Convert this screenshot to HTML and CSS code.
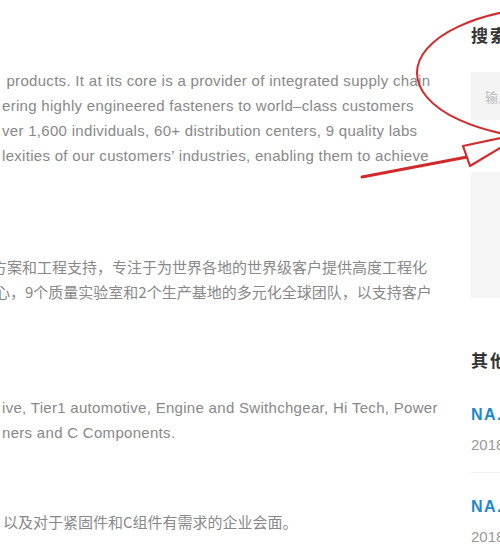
FILE: index.html
```html
<!DOCTYPE html>
<html lang="zh">
<head>
<meta charset="utf-8">
<title>About</title>
<link rel="stylesheet" href="styles.css">
</head>
<body>
<div class="page">
  <main class="main">
    <div class="para en">
      <div class="ln">&nbsp;products. It at its core is a provider of integrated supply chain</div>
      <div class="ln">ering highly engineered fasteners to world–class customers</div>
      <div class="ln">ver 1,600 individuals, 60+ distribution centers, 9 quality labs</div>
      <div class="ln">lexities of our customers’ industries, enabling them to achieve</div>
    </div>
    <div class="para zh p2">
      <div class="ln"><span class="cut cut-a">方</span>案和工程支持，专注于为世界各地的世界级客户提供高度工程化</div>
      <div class="ln"><span class="cut cut-b">心</span>，9个质量实验室和2个生产基地的多元化全球团队，以支持客户</div>
    </div>
    <div class="para en p3">
      <div class="ln">ive, Tier1 automotive, Engine and Swithchgear, Hi Tech, Power</div>
      <div class="ln">ners and C Components.</div>
    </div>
    <div class="para zh p4">
      <div class="ln lead">以及对于紧固件和C组件有需求的企业会面。</div>
    </div>
  </main>
  <aside class="side">
    <h3 class="side-title">搜索文章</h3>
    <div class="search">输入关键词</div>
    <div class="box"></div>
    <h3 class="side-title other">其他文章</h3>
    <div class="item">
      <div class="item-title">NA.FASTENER</div>
      <div class="item-date">2018-05-16</div>
    </div>
    <div class="item next">
      <div class="item-title">NA.FASTENER</div>
      <div class="item-date">2018-04-20</div>
    </div>
  </aside>
</div>
<svg class="mark" width="500" height="200" viewBox="0 0 500 200">
  <ellipse cx="560" cy="73" rx="143" ry="66" fill="none" stroke="#d22a2c" stroke-width="2"/>
  <path d="M362 177 L467 157" fill="none" stroke="#d22a2c" stroke-width="3" stroke-linecap="round"/>
  <path d="M463 146 L525 133 L470 166 Z" fill="#fff" stroke="#d22a2c" stroke-width="2.2" stroke-linejoin="round"/>
</svg>
</body>
</html>
```
FILE: styles.css
```css
html, body {
  margin: 0;
  background: #fff;
}
body {
  position: relative;
  width: 500px;
  height: 550px;
  overflow: hidden;
  font-family: "Liberation Sans", "Noto Sans CJK SC", sans-serif;
}
.page {
  display: flex;
  width: 900px;
}
.main {
  flex: none;
  width: 445px;
  overflow: hidden;
  color: #888;
  font-size: 15px;
  line-height: 25px;
  padding-top: 68px;
}
.ln {
  white-space: nowrap;
}
.en .ln {
  padding-left: 2px;
}
.en {
  letter-spacing: 0.3px;
}
.zh {
  font-family: "Noto Sans CJK SC", sans-serif;
}
.zh .lead {
  padding-left: 3px;
}
.p2 { margin-top: 86px; }
.p3 { margin-top: 91px; }
.p4 { margin-top: 64px; }
.cut {
  display: inline-block;
  overflow: hidden;
  direction: rtl;
  vertical-align: top;
}
.cut-a { width: 7px; }
.cut-b { width: 10px; }

.side {
  flex: none;
  width: 300px;
  margin-left: 26px;
  padding-top: 23px;
}
.side-title {
  margin: 0;
  font-family: "Noto Sans CJK SC", sans-serif;
  font-size: 17px;
  line-height: 24px;
  font-weight: bold;
  color: #333;
  letter-spacing: 2px;
}
.search {
  margin-top: 25px;
  height: 48px;
  background: #f4f4f4;
  display: flex;
  align-items: center;
  padding-left: 14px;
  color: #bbb;
  font-family: "Noto Sans CJK SC", sans-serif;
  font-size: 13px;
}
.box {
  margin-top: 52px;
  height: 126px;
  background: #f5f5f5;
}
.other {
  margin-top: 50px;
}
.item {
  padding: 31px 0 15px;
  border-bottom: 1px solid #eee;
}
.item.next {
  padding-top: 22px;
}
.item-title {
  color: #1a88d0;
  font-size: 16px;
  font-weight: bold;
  letter-spacing: 1.5px;
  line-height: 24px;
  white-space: nowrap;
}
.item-date {
  color: #999;
  font-size: 15px;
  line-height: 24px;
  margin-top: 6px;
}
.mark {
  position: absolute;
  top: 0;
  left: 0;
  pointer-events: none;
}
```
